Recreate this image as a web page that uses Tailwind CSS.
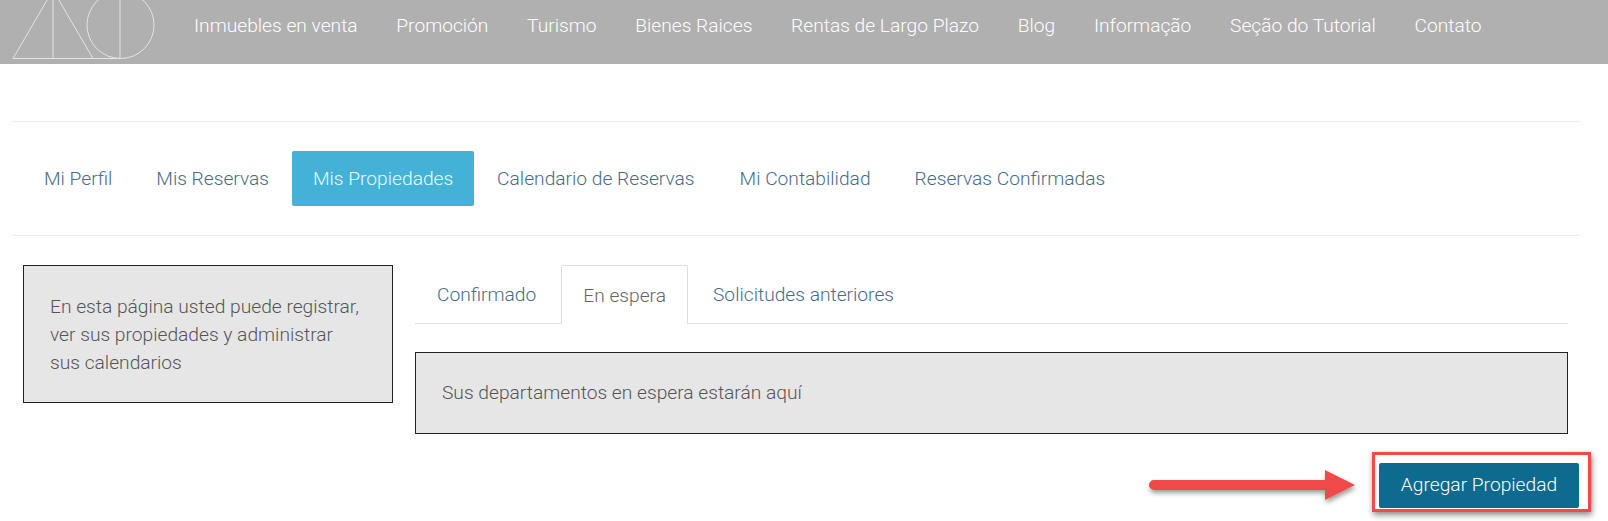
<!DOCTYPE html>
<html lang="en">
<head>
  <meta charset="UTF-8">
  <title>Mis Propiedades</title>
  <script src="https://cdn.jsdelivr.net/npm/@tailwindcss/browser@4"></script>
</head>
<body class="relative h-[521px] overflow-hidden bg-white font-['Roboto',sans-serif] font-light">
  <header class="flex h-16 items-center bg-[#b0b0b0] text-white">
    <svg class="ml-[12px] h-16 w-[144px] shrink-0 overflow-visible" viewBox="0 0 144 64" fill="none" stroke="#e4e4e4" stroke-width="1">
      <path d="M1 58.5L41 -10L81 58.5M1 58.5H108M41 -10V58.5M108 -9V58.5"/>
      <circle cx="108.5" cy="25" r="33.5"/>
    </svg>
    <nav class="ml-[38px] flex gap-[38.7px] pb-[12px] text-[19.2px]">
      <a>Inmuebles en venta</a>
      <a>Promoción</a>
      <a>Turismo</a>
      <a>Bienes Raices</a>
      <a>Rentas de Largo Plazo</a>
      <a>Blog</a>
      <a>Informação</a>
      <a>Seção do Tutorial</a>
      <a>Contato</a>
    </nav>
  </header>

  <main class="mx-3 mt-[57px] w-[1568px]">
    <div class="flex h-[115px] items-center border-y border-[#ececec] pl-[10px] text-[19.2px] text-[#476c86]">
      <a class="px-[22px] pt-[1px]">Mi Perfil</a>
      <a class="px-[22px] pt-[1px]">Mis Reservas</a>
      <a class="ml-[1px] flex h-[55px] w-[182px] items-center justify-center rounded-[2px] bg-[#43b2d6] pt-[1px] text-[#eafcff]">Mis Propiedades</a>
      <a class="px-[23px] pt-[1px]">Calendario de Reservas</a>
      <a class="px-[22px] pt-[1px]">Mi Contabilidad</a>
      <a class="px-[22px] pt-[1px]">Reservas Confirmadas</a>
    </div>

    <div class="mt-[29px] flex items-start pl-[11px] pr-[12px]">
      <div class="h-[138px] w-[370px] shrink-0 border border-[#222] bg-[#e6e6e6] pt-[27px] pl-[26px] text-[19.2px] leading-[28px] text-[#555]">
        En esta página usted puede registrar,<br>ver sus propiedades y administrar<br>sus calendarios
      </div>

      <div class="ml-[22px] flex-1">
        <div class="flex h-[59px] border-b border-[#dddddd] text-[19.2px] text-[#476c86]">
          <a class="mr-[3px] flex items-center px-[22px] pt-[3px]">Confirmado</a>
          <a class="-mb-px flex items-center rounded-t-[2px] border border-[#dddddd] border-b-white bg-white px-[21px] pt-[3px] text-[#666]">En espera</a>
          <a class="flex items-center px-[25px] pt-[3px]">Solicitudes anteriores</a>
        </div>
        <div class="mt-[28px] flex h-[82px] items-center border border-[#222] bg-[#e6e6e6] pl-[26px] text-[19.2px] text-[#555]">
          Sus departamentos en espera estarán aquí
        </div>
        <div class="mt-[29px] flex justify-end">
          <button class="-mr-[11px] h-[45px] w-[200px] rounded-[2px] bg-[#0e6a8f] text-[19.2px] text-white">Agregar Propiedad</button>
        </div>
      </div>
    </div>
  </main>

  <!-- annotation over the page -->
  <div class="absolute left-[1372px] top-[452px] h-[60px] w-[219px] border-[3px] border-[#f04a4a] shadow-[1px_3px_6px_rgba(0,0,0,0.45)]"></div>
  <svg class="absolute left-[1140px] top-[460px] overflow-visible" width="220" height="50" viewBox="0 0 220 50">
    <defs>
      <filter id="arrowShadow" x="-5%" y="-30%" width="110%" height="170%">
        <feDropShadow dx="1" dy="3" stdDeviation="2.5" flood-color="#000" flood-opacity="0.4"/>
      </filter>
    </defs>
    <path filter="url(#arrowShadow)" fill="#f04a4a" d="M14 20H185V10L215 25L185 40V30H14A5 5 0 0 1 14 20Z"/>
  </svg>
</body>
</html>
